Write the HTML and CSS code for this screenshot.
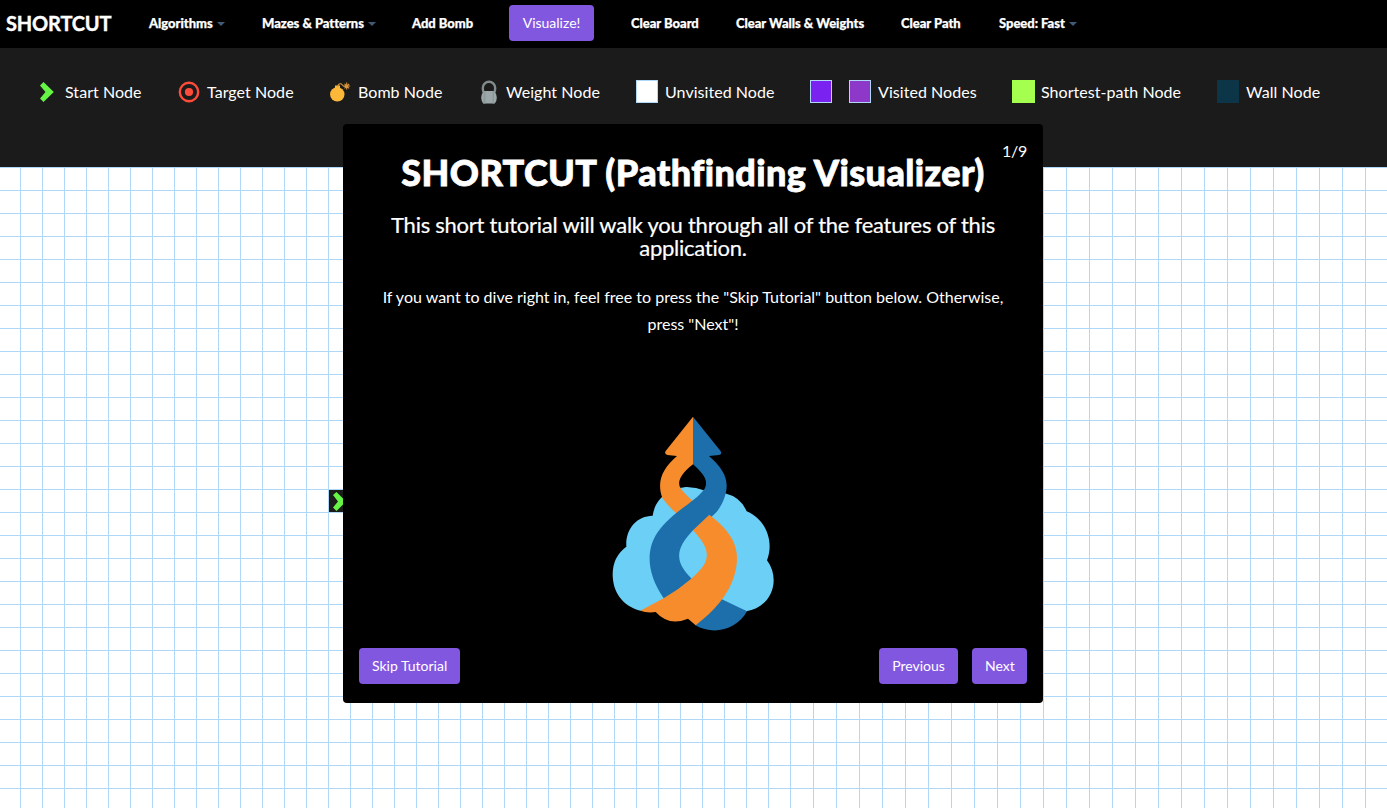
FILE: index.html
```
<!DOCTYPE html>
<html lang="en">
<head>
<meta charset="utf-8">
<title>SHORTCUT</title>
<link rel="stylesheet" href="styles.css">
</head>
<body>
<nav class="navbar">
  <a class="brand">SHORTCUT</a>
  <a class="link">Algorithms<i class="caret"></i></a>
  <a class="link">Mazes &amp; Patterns<i class="caret"></i></a>
  <a class="link">Add Bomb</a>
  <button class="btn visualize">Visualize!</button>
  <a class="link">Clear Board</a>
  <a class="link">Clear Walls &amp; Weights</a>
  <a class="link">Clear Path</a>
  <a class="link">Speed: Fast<i class="caret"></i></a>
</nav>
<section class="legend">
  <div class="entry start"><svg class="icon" viewBox="0 0 22 24"><path fill="#66f545" d="M2 5.500L5.500 2L15.800 12L5.500 22L2 18.500L7.500 12Z"/></svg><span>Start Node</span></div>
  <div class="entry"><svg class="icon" viewBox="0 0 22 24"><circle cx="11" cy="12" r="9.200" fill="none" stroke="#ff4b3a" stroke-width="2.400"/><circle cx="11" cy="12" r="4.100" fill="#ff4b3a"/></svg><span>Target Node</span></div>
  <div class="entry"><svg class="icon" viewBox="0 0 22 24"><g fill="#fdb83a"><circle cx="8.300" cy="14.400" r="7.200"/><path d="M6 5.500h5v4H6z"/></g><path d="M8.500 6.500C9.500 3.500 12 3 13.200 4.700S15 7 17 6M17.700 2.500v7M14.500 6h6.600M15.500 3.800l4.600 4.500M20.100 3.800l-4.600 4.500" fill="none" stroke="#d9973a" stroke-width="1.100"/></svg><span>Bomb Node</span></div>
  <div class="entry weight"><svg class="icon" viewBox="0 0 22 24"><path fill="none" stroke="#818b8c" stroke-width="2.400" d="M4.500 12.500Q3.800 10 3.800 8a6.200 6.200 0 0 1 12.400 0Q16.200 10 15.500 12.500"/><path fill="#9ba7a8" d="M5 11h10q2.800 2.800 2.800 6.500t-2 6H4.200q-2-2.300-2-6T5 11"/><path fill="#8e999b" d="M5 11h1.500v12.500H4.200zM13.500 11H15v12.500h-1.500z"/></svg><span>Weight Node</span></div>
  <div class="entry"><i class="swatch unvisited"></i><span>Unvisited Node</span></div>
  <div class="entry"><i class="swatch visited-a"></i><i class="swatch visited-b"></i><span>Visited Nodes</span></div>
  <div class="entry"><i class="swatch shortest"></i><span>Shortest-path Node</span></div>
  <div class="entry"><i class="swatch wall"></i><span>Wall Node</span></div>
</section>
<main class="board">
  <div class="cells narrow"></div>
  <div class="cells wide"></div>
  <div class="start-node"><svg width="22" height="22" viewBox="0 0 22 22"><path fill="#66f545" d="M4 5L7.500 2L17 11.500L7.500 21L4 17.500L9 11.500Z"/></svg></div>
</main>
<div class="tutorial">
  <div class="counter">1/9</div>
  <h3>SHORTCUT (Pathfinding Visualizer)</h3>
  <h6>This short tutorial will walk you through all of the features of this application.</h6>
  <p>If you want to dive right in, feel free to press the "Skip Tutorial" button below. Otherwise, press "Next"!</p>
  <svg class="logo" viewBox="0 0 570 705">
    <path fill="#6bcff6" d="M158 332C165 280 210 246 265 246Q290 246 312 256L375 265Q423 277 440 319C498 343 523 410 501 466C545 526 513 607 439 619L365 588L200 600L121 617C67 604 38 560 38 508Q38 455 79 425C76 371 110 333 158 332Z"/>
    <path fill="#000" d="M279 178Q335 220 312 256Q276 242 242 247Q227 218 279 178Z"/>
    <path fill="#f78c2c" d="M279 35V178C239 210 231 232 242 250Q254 268 279 288L232 327Q206 306 187 279C169 228 188 190 231 153L202 150Q192 147 197 138Z"/>
    <path fill="#1c6fab" d="M279 35L361 137Q368 147 357 150L327 153C377 196 389 232 374 276C354 334 324 340 279 376C230 428 219 466 275 521L195 585L190 578C144 511 134 439 173 382C217 319 284 293 314 251C327 226 309 205 279 178Z"/>
    <path fill="#1c6fab" d="M364 582L441 619C412 672 342 694 285 660Z"/>
    <path fill="#f78c2c" d="M328 329C394 380 427 429 404 508C388 568 342 619 287 661L264 641Q207 665 167 621Q142 625 121 617L192 579Q237 553 274 521C313 486 328 466 317 430Q308 407 279 376Z"/>
  </svg>
  <div class="actions">
    <button class="btn">Skip Tutorial</button>
    <button class="btn previous">Previous</button>
    <button class="btn next">Next</button>
  </div>
</div>
</body>
</html>
```
FILE: styles.css
```
* { box-sizing: border-box; }
body {
  margin: 0;
  height: 808px;
  overflow: hidden;
  display: flex;
  flex-direction: column;
  background: #fff;
  color: #fff;
  font-family: Lato, sans-serif;
}
.navbar {
  height: 48px;
  flex: none;
  padding: 0 0 2px 6px;
  background: #000;
  display: grid;
  grid-template-columns: 143px 113px 150px 97px 122px 105px 165px 98px 1fr;
  align-items: center;
  white-space: nowrap;
}
.brand { font-size: 20px; font-weight: 700; letter-spacing: -0.15px; -webkit-text-stroke: 0.4px #fff; }
.link { font-size: 13px; font-weight: 900; letter-spacing: -0.03px; -webkit-text-stroke: 0.25px #fff; }
.caret {
  display: inline-block;
  margin-left: 4px;
  vertical-align: 2px;
  border: 4px solid transparent;
  border-top-color: #415b76;
  border-bottom: 0;
}
.btn {
  height: 36px;
  padding: 0 13px 2px;
  border: 0;
  border-radius: 4px;
  background: #8257e0;
  color: #fff;
  font: 400 14px Lato, sans-serif;
  white-space: nowrap;
}
.visualize { justify-self: start; width: 85px; }
.legend {
  height: 119px;
  flex: none;
  padding: 32px 0 0 38px;
  background: #1b1b1b;
  display: grid;
  grid-template-columns: 140px 151px 150px 157px 174px 202px 205px 1fr;
  align-items: start;
  font-size: 16px;
  letter-spacing: 0.05px;
  white-space: nowrap;
}
.entry { display: flex; align-items: flex-start; height: 24px; line-height: 24px; }
.icon { width: 22px; height: 24px; margin-right: 7px; }
.start .icon, .weight .icon { margin-right: 5px; }
.swatch { width: 22px; height: 23px; margin-right: 7px; border: 1px solid #afd8f8; }
.unvisited { background: #fff; }
.visited-a { background: #7a22ef; margin-right: 17px; }
.visited-b { background: #8d38c8; }
.shortest { width: 23px; margin-right: 6px; background: #a4ff4f; border-color: #a4ff4f; }
.wall { background: #0c3547; border-color: #0c3547; }
.board { flex: 1; display: flex; position: relative; }
.cells {
  --line: #afd8f8;
  background-image: linear-gradient(var(--line) 1px, transparent 1px), linear-gradient(to left, var(--line) 1px, transparent 1px);
}
.narrow { width: 791px; background-size: 22px 23px; background-position: -1px 0; }
.wide { flex: 1; background-size: 23px 23px; }
.start-node { position: absolute; left: 329px; top: 323px; width: 22px; height: 22px; background: #1b1b1b; }
.tutorial {
  position: absolute;
  left: 343px;
  top: 124px;
  width: 700px;
  height: 579px;
  padding: 17px 16px 19px;
  border-radius: 4px;
  background: #000;
  display: flex;
  flex-direction: column;
  align-items: center;
  text-align: center;
}
.counter { align-self: flex-end; height: 10px; font-size: 16px; line-height: 20px; letter-spacing: -0.3px; }
h3 { margin: 0; font-size: 36px; font-weight: 900; line-height: 42px; letter-spacing: 0.4px; -webkit-text-stroke: 0.8px #fff; white-space: nowrap; }
h6 { margin: 20px 0 0; width: 640px; font-size: 22px; font-weight: 400; line-height: 23px; letter-spacing: -0.25px; -webkit-text-stroke: 0.2px #fff; }
p { margin: 24px 0 0; width: 640px; font-size: 16px; line-height: 27px; }
.logo { width: 190px; height: 235px; margin: 68px 0 0 4px; flex: none; }
.actions { margin-top: auto; width: 100%; display: flex; gap: 14px; }
.previous { margin-left: auto; width: 79px; }
.next { width: 55px; }
```
